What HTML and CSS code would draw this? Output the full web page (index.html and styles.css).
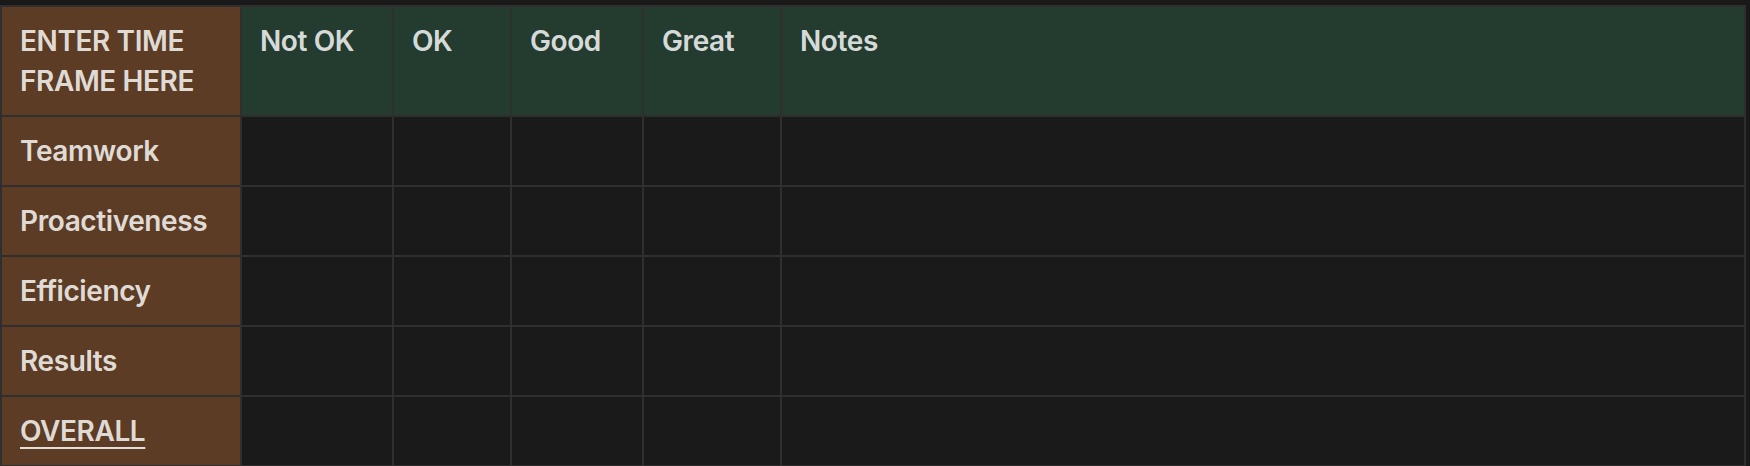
FILE: index.html
```html
<!DOCTYPE html>
<html lang="en">
<head>
<meta charset="utf-8">
<title>Evaluation table</title>
<link rel="stylesheet" href="styles.css">
</head>
<body>
<div class="table" role="table">
  <div class="cell side head" role="columnheader">ENTER TIME FRAME HERE</div>
  <div class="cell top" role="columnheader">Not OK</div>
  <div class="cell top" role="columnheader">OK</div>
  <div class="cell top" role="columnheader">Good</div>
  <div class="cell top" role="columnheader">Great</div>
  <div class="cell top" role="columnheader">Notes</div>

  <div class="cell side" role="rowheader">Teamwork</div>
  <div class="cell"></div><div class="cell"></div><div class="cell"></div><div class="cell"></div><div class="cell"></div>

  <div class="cell side" role="rowheader">Proactiveness</div>
  <div class="cell"></div><div class="cell"></div><div class="cell"></div><div class="cell"></div><div class="cell"></div>

  <div class="cell side" role="rowheader">Efficiency</div>
  <div class="cell"></div><div class="cell"></div><div class="cell"></div><div class="cell"></div><div class="cell"></div>

  <div class="cell side" role="rowheader">Results</div>
  <div class="cell"></div><div class="cell"></div><div class="cell"></div><div class="cell"></div><div class="cell"></div>

  <div class="cell side" role="rowheader"><span class="under">OVERALL</span></div>
  <div class="cell"></div><div class="cell"></div><div class="cell"></div><div class="cell"></div><div class="cell"></div>
</div>
</body>
</html>
```

FILE: styles.css
```css
html, body {
  margin: 0;
  padding: 0;
  background: #191919;
}

body {
  padding-top: 5px;
  font-family: Inter, "Noto Sans", sans-serif;
  font-size: 28px;
  font-weight: 600;
  letter-spacing: -0.4px;
  line-height: 40px;
  color: rgba(255, 255, 255, 0.84);
}

.table {
  display: grid;
  width: 1746px;
  grid-template-columns: 240px 152px 118px 132px 138px 964px;
  grid-template-rows: 110px repeat(5, 70px);
  border-top: 2px solid #2f2f2f;
  border-left: 2px solid #2f2f2f;
  box-sizing: border-box;
}

.cell {
  box-sizing: border-box;
  padding: 14px 18px;
  border-right: 2px solid #2f2f2f;
  border-bottom: 2px solid #2f2f2f;
  background: #1a1a1a;
  overflow: hidden;
}

.side {
  background: #5c3c24;
}

.top {
  background: #243b30;
}

.under {
  text-decoration: underline;
  text-decoration-thickness: 2px;
  text-underline-offset: 6px;
}
```
